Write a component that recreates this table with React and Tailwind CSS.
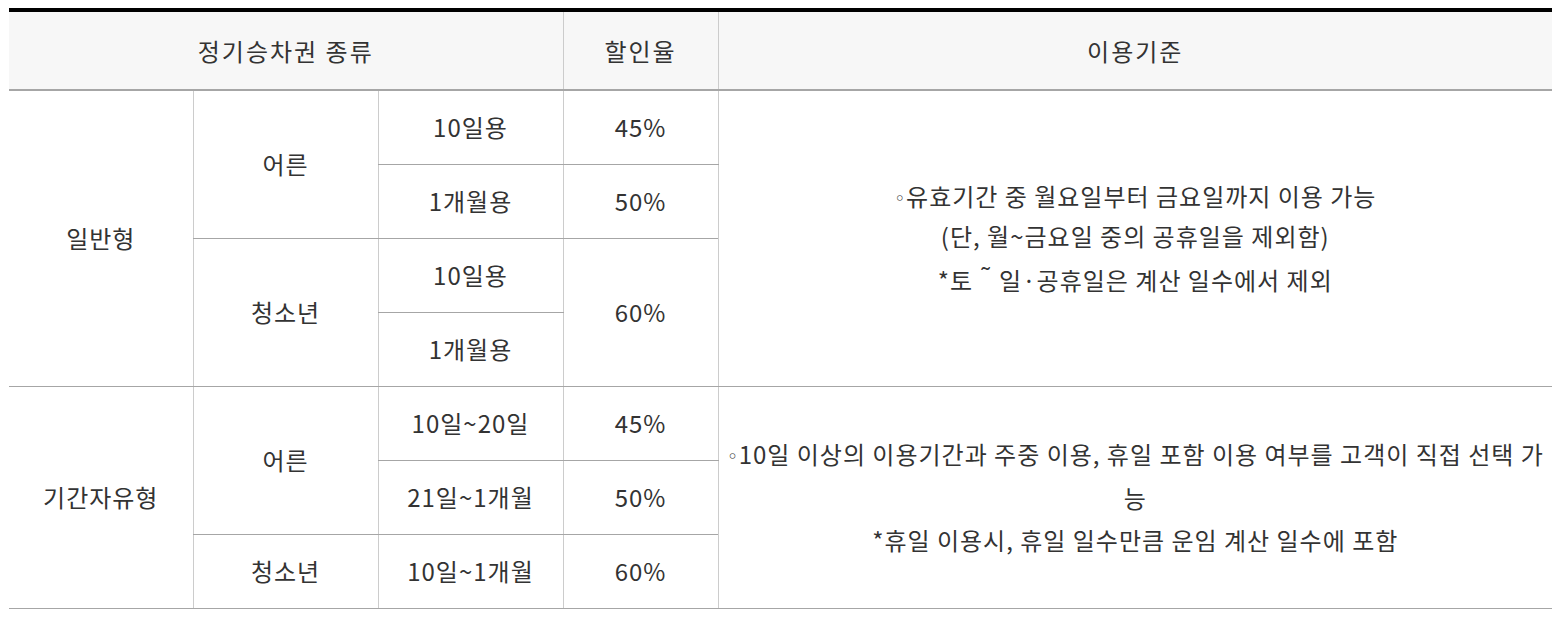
import React from 'react';

const th = "font-normal text-[#333] tracking-[2px] border-b-2 border-b-[#a6a6a6]";
const td = "border-b border-b-[#a6a6a6] border-l border-l-[#cccccc]";
const tdFirst = "border-b border-b-[#a6a6a6]";

function Dot() {
  return <span className="inline-block w-[12px] text-left text-[19px] align-[1px] font-['DejaVu_Sans',sans-serif]">◦</span>;
}

export default function App() {
  return (
    <div className="bg-white w-[1558px] h-[620px] pt-[8px] font-['Noto_Sans_CJK_KR','Noto_Sans',sans-serif] text-[24px] tracking-[1px] text-[#333]">
      <table className="ml-[9px] w-[1543px] table-fixed border-collapse border-t-4 border-t-black text-center">
        <colgroup>
          <col className="w-[184px]" />
          <col className="w-[185px]" />
          <col className="w-[185px]" />
          <col className="w-[155px]" />
          <col />
        </colgroup>
        <thead>
          <tr className="h-[80px] bg-[#f7f7f7]">
            <th colSpan={3} className={th}>정기승차권 종류</th>
            <th className={`${th} border-l border-l-[#cccccc]`}>할인율</th>
            <th className={`${th} border-l border-l-[#cccccc]`}>이용기준</th>
          </tr>
        </thead>
        <tbody>
          <tr className="h-[74px]">
            <td rowSpan={4} className={tdFirst}>일반형</td>
            <td rowSpan={2} className={td}>어른</td>
            <td className={td}>10일용</td>
            <td className={td}>45%</td>
            <td rowSpan={4} className={`${td} leading-[38px]`}>
              <Dot />유효기간 중 월요일부터 금요일까지 이용 가능<br />
              (단, 월~금요일 중의 공휴일을 제외함)<br />
              *토<span className="inline-block w-[26px] text-center align-[6px]">˜</span>일·공휴일은 계산 일수에서 제외
            </td>
          </tr>
          <tr className="h-[74px]">
            <td className={td}>1개월용</td>
            <td className={td}>50%</td>
          </tr>
          <tr className="h-[74px]">
            <td rowSpan={2} className={td}>청소년</td>
            <td className={td}>10일용</td>
            <td rowSpan={2} className={td}>60%</td>
          </tr>
          <tr className="h-[74px]">
            <td className={td}>1개월용</td>
          </tr>
          <tr className="h-[74px]">
            <td rowSpan={3} className={tdFirst}>기간자유형</td>
            <td rowSpan={2} className={td}>어른</td>
            <td className={td}>10일~20일</td>
            <td className={td}>45%</td>
            <td rowSpan={3} className={`${td} leading-[42px] whitespace-nowrap`}>
              <Dot />10일 이상의 이용기간과 주중 이용, 휴일 포함 이용 여부를 고객이 직접 선택 가<br />
              능<br />
              *휴일 이용시, 휴일 일수만큼 운임 계산 일수에 포함
            </td>
          </tr>
          <tr className="h-[74px]">
            <td className={td}>21일~1개월</td>
            <td className={td}>50%</td>
          </tr>
          <tr className="h-[74px]">
            <td className={td}>청소년</td>
            <td className={td}>10일~1개월</td>
            <td className={td}>60%</td>
          </tr>
        </tbody>
      </table>
    </div>
  );
}
